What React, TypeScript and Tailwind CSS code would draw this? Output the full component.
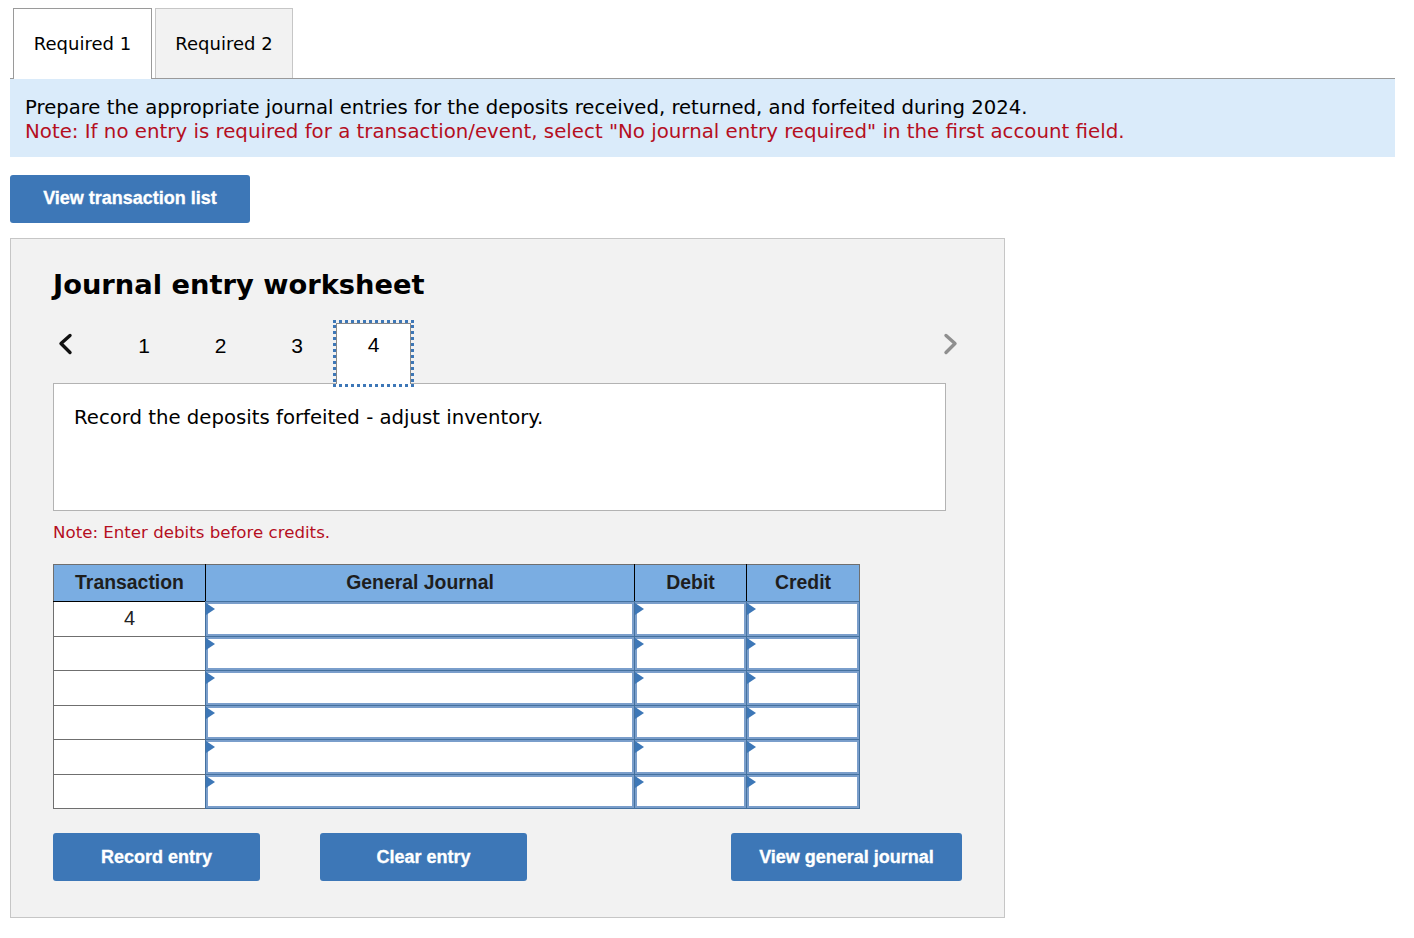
const rows = [0, 1, 2, 3, 4, 5];

const BlueButton = ({ text, className }: { text: string; className: string }) => (
  <button
    className={
      "h-12 rounded-[3px] bg-[#3d77b7] text-center font-['Liberation_Sans',sans-serif] text-[18px] font-bold text-white [-webkit-text-stroke:0.3px_white] " +
      className
    }
  >
    {text}
  </button>
);

const EntryCell = () => (
  <td className="relative border border-[#6f6f6f] p-0">
    <div className="h-full border-2 border-[#7a9ecb] bg-white outline outline-1 outline-[#44719f]" />
    <span className="absolute left-0 top-px h-0 w-0 border-y-[6px] border-l-[9px] border-y-transparent border-l-[#3d77b7]" />
  </td>
);

const App = () => {
  return (
    <div className="min-h-[938px] bg-white font-['DejaVu_Sans',sans-serif] text-black">
      <div className="w-[1395px] pl-[10px] pt-2">
        <div className="flex h-[71px] gap-[3px] border-b border-[#9a9a9a] pl-[3px]">
          <div className="z-10 -mb-px flex h-[71px] w-[139px] items-center justify-center border border-b-0 border-[#9a9a9a] bg-white pb-[2px] text-[18px]">
            Required 1
          </div>
          <div className="flex h-[70px] w-[138px] items-center justify-center border border-b-0 border-[#c6c6c6] bg-[#f2f2f2] pb-px text-[18px]">
            Required 2
          </div>
        </div>
        <div className="h-[78px] bg-[#daebfa] pl-[15px] pt-[17px] leading-6">
          <p className="text-[19.65px]">Prepare the appropriate journal entries for the deposits received, returned, and forfeited during 2024.</p>
          <p className="text-[19.8px] text-[#b50f1f]">
            Note: If no entry is required for a transaction/event, select "No journal entry required" in the first account field.
          </p>
        </div>
      </div>

      <div className="pl-[10px] pt-[18px]">
        <BlueButton text="View transaction list" className="w-60 pb-px" />
      </div>

      <div className="ml-[10px] mt-[15px] h-[680px] w-[995px] border border-[#c6c6c6] bg-[#f2f2f2] pl-[42px] pt-[28px]">
        <h1 className="text-[27.3px] font-bold leading-9">Journal entry worksheet</h1>

        <div className="relative z-10 mt-[17px] flex h-[66px] w-[910px] items-start">
          <svg width="24" height="24" viewBox="0 0 24 24" className="mt-3">
            <path d="M17 4 L8 12 L17 21" transform="translate(0 -0.5)" fill="none" stroke="#111" strokeWidth="3.4" strokeLinecap="round" strokeLinejoin="round" />
          </svg>
          <div className="ml-[28.75px] flex font-['Liberation_Sans',sans-serif] text-[21px]">
            <div className="flex h-[52px] w-[76.5px] items-center justify-center">1</div>
            <div className="flex h-[52px] w-[76.5px] items-center justify-center">2</div>
            <div className="flex h-[52px] w-[76.5px] items-center justify-center">3</div>
            <div className="-ml-[2.25px] h-[67px] w-[81px] border-[3px] border-dotted border-[#3d77b7]">
              <div className="h-[61px] border border-b-0 border-[#8a8a8a] bg-white pt-[7px] text-center leading-7">4</div>
            </div>
          </div>
          <svg width="24" height="24" viewBox="0 0 24 24" className="ml-auto mt-3">
            <path d="M7 4 L16 12 L7 21" transform="translate(0 -0.5)" fill="none" stroke="#8f8f8f" strokeWidth="3.4" strokeLinecap="round" strokeLinejoin="round" />
          </svg>
        </div>

        <div className="-mt-[3px] h-[128px] w-[893px] border border-[#b3b3b3] bg-white pl-5 pt-[22px] text-[19.7px] leading-6">
          Record the deposits forfeited - adjust inventory.
        </div>

        <p className="mt-[10px] text-[16.65px] leading-6 text-[#b50f1f]">Note: Enter debits before credits.</p>

        <table className="mt-[19px] h-[245px] w-[807px] table-fixed border-collapse font-['Liberation_Sans',sans-serif]">
          <thead>
            <tr className="h-[37px] bg-[#7aade2] text-[19.4px] text-[#1e1e1e]">
              <th className="w-[152px] border border-[#6f6f6f] border-b-black border-r-black p-0 pb-px">Transaction</th>
              <th className="w-[429px] border border-[#6f6f6f] border-b-black border-r-black p-0 pb-px">General Journal</th>
              <th className="w-[112px] border border-[#6f6f6f] border-b-black border-r-black p-0 pb-px">Debit</th>
              <th className="border border-[#6f6f6f] border-b-black p-0 pb-px">Credit</th>
            </tr>
          </thead>
          <tbody>
            {rows.map((row) => (
              <tr key={row} className="h-[34.5px]">
                <td className="border border-[#6f6f6f] bg-white p-0 pb-px text-center text-[20px] text-[#222]">
                  {row === 0 ? "4" : ""}
                </td>
                <EntryCell />
                <EntryCell />
                <EntryCell />
              </tr>
            ))}
          </tbody>
        </table>

        <div className="mt-6 flex w-[909px]">
          <BlueButton text="Record entry" className="w-[207px]" />
          <BlueButton text="Clear entry" className="ml-[60px] w-[207px]" />
          <BlueButton text="View general journal" className="ml-auto w-[231px]" />
        </div>
      </div>
    </div>
  );
};

export default App;
